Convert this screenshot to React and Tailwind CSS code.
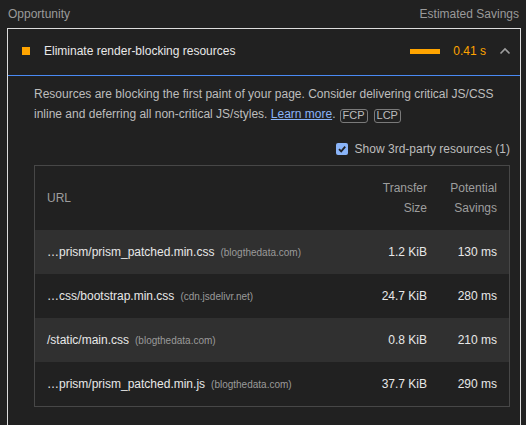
import React from "react";

const rows = [
  { url: "…prism/prism_patched.min.css", host: "(blogthedata.com)", size: "1.2 KiB", save: "130 ms", alt: true },
  { url: "…css/bootstrap.min.css", host: "(cdn.jsdelivr.net)", size: "24.7 KiB", save: "280 ms", alt: false },
  { url: "/static/main.css", host: "(blogthedata.com)", size: "0.8 KiB", save: "210 ms", alt: true },
  { url: "…prism/prism_patched.min.js", host: "(blogthedata.com)", size: "37.7 KiB", save: "290 ms", alt: false },
];

function Badge({ children, className }) {
  return (
    <span
      className={`inline-flex items-center h-[14px] px-[2px] border border-[#7a7a7a] rounded-[3px] text-[11px] leading-none text-[#bdbdbd] align-[-1px] ${className}`}
    >
      {children}
    </span>
  );
}

export default function App() {
  return (
    <div
      className="w-[526px] h-[425px] overflow-hidden bg-[#212121] text-[12px]"
      style={{ fontFamily: '"Liberation Sans", Arial, sans-serif' }}
    >
      <div className="flex items-center justify-between h-[28px] pl-[8px] pr-[7px] text-[#9a9a9a]">
        <span>Opportunity</span>
        <span>Estimated Savings</span>
      </div>

      <div className="ml-[7px] w-[514px] border-x border-t border-[#dcdcdc] pb-[30px]">
        <div className="flex items-center h-[47px] pl-[14px] pr-[9px] pb-[2px] border-b border-[#4a8af4]">
          <span className="w-[8px] h-[8px] bg-[#ffa400]" />
          <span className="ml-[14px] flex-1 text-[#e8e8e8]">Eliminate render-blocking resources</span>
          <span className="w-[30px] h-[5px] bg-[#ffa400]" />
          <span className="ml-[13px] text-[#ffa400]">0.41 s</span>
          <svg className="ml-[13px]" width="12" height="8" viewBox="0 0 12 8">
            <path d="M1.5 6.5 L6 2 L10.5 6.5" fill="none" stroke="#9e9e9e" strokeWidth="1.6" />
          </svg>
        </div>

        <div className="pl-[26px] pr-[10px] pt-[8px]">
          <p className="leading-[20px] text-[#bdbdbd]">
            Resources are blocking the first paint of your page. Consider delivering critical JS/CSS
            inline and deferring all non-critical JS/styles.{" "}
            <span className="text-[#8ab4f8] underline">Learn more</span>.
            <Badge className="ml-[4px]">FCP</Badge>
            <Badge className="ml-[6px]">LCP</Badge>
          </p>

          <div className="flex justify-end items-center gap-[7px] h-[20px] mt-[15px] text-[#bdbdbd]">
            <span className="flex items-center justify-center w-[12px] h-[12px] rounded-[2px] bg-[#8ab4f8]">
              <svg width="10" height="10" viewBox="0 0 10 10">
                <path d="M2 5.2 L4.2 7.4 L8.2 2.6" fill="none" stroke="#202124" strokeWidth="1.8" />
              </svg>
            </span>
            <span>Show 3rd-party resources (1)</span>
          </div>

          <div className="mt-[6px] border border-[#474747]">
            <div className="flex items-center h-[64px] pl-3 pr-3 leading-[20px] text-[#9e9e9e]">
              <span className="flex-1">URL</span>
              <span className="w-[80px] text-right">Transfer<br />Size</span>
              <span className="w-[58px] ml-3 text-right">Potential<br />Savings</span>
            </div>
            {rows.map((r) => (
              <div
                key={r.url}
                className={`flex items-center h-[44px] pl-3 pr-3 ${r.alt ? "bg-[#303030]" : "bg-[#212121]"}`}
              >
                <span className="flex-1 text-[#e8e8e8]">
                  {r.url}
                  <span className="ml-[6px] text-[10px] text-[#9a9a9a]">{r.host}</span>
                </span>
                <span className="w-[80px] text-right text-[#e8e8e8]">{r.size}</span>
                <span className="w-[58px] ml-3 text-right text-[#e8e8e8]">{r.save}</span>
              </div>
            ))}
          </div>
        </div>
      </div>
    </div>
  );
}
